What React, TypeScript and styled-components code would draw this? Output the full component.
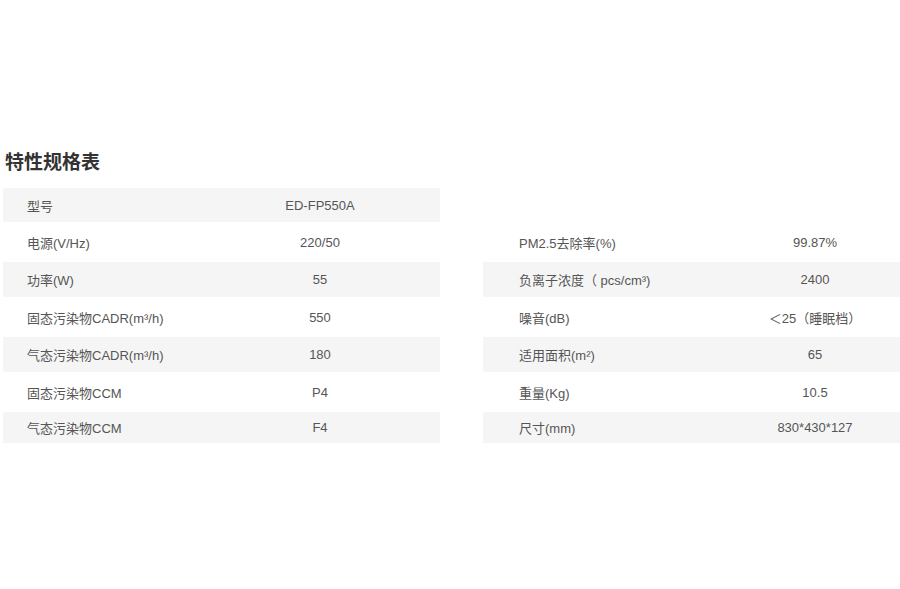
import * as React from 'react';
import styled, { createGlobalStyle } from 'styled-components';

interface SpecRow {
  label: string;
  value: string;
}

const rowHeights = [34, 40, 35, 40, 35, 40, 31];

const leftRows: (SpecRow | null)[] = [
  { label: '型号', value: 'ED-FP550A' },
  { label: '电源(V/Hz)', value: '220/50' },
  { label: '功率(W)', value: '55' },
  { label: '固态污染物CADR(m³/h)', value: '550' },
  { label: '气态污染物CADR(m³/h)', value: '180' },
  { label: '固态污染物CCM', value: 'P4' },
  { label: '气态污染物CCM', value: 'F4' },
];

// right table has no model row, so the first slot stays blank
const rightRows: (SpecRow | null)[] = [
  null,
  { label: 'PM2.5去除率(%)', value: '99.87%' },
  { label: '负离子浓度（ pcs/cm³)', value: '2400' },
  { label: '噪音(dB)', value: '＜25（睡眠档）' },
  { label: '适用面积(m²)', value: '65' },
  { label: '重量(Kg)', value: '10.5' },
  { label: '尺寸(mm)', value: '830*430*127' },
];

interface SpecTableProps {
  rows: (SpecRow | null)[];
  columns: string;
  indent: number;
}

const SpecTable: React.FC<SpecTableProps> = ({ rows, columns, indent }) => {
  return (
    <Table>
      {rows.map((row, i) => (
        <Row
          key={i}
          $columns={columns}
          $height={rowHeights[i]}
          $shaded={i % 2 === 0 && row !== null}
        >
          <Label $indent={indent}>{row ? row.label : ''}</Label>
          <Value>{row ? row.value : ''}</Value>
        </Row>
      ))}
    </Table>
  );
};

const App: React.FC = () => {
  return (
    <>
      <GlobalStyle />
      <Page>
        <Title>特性规格表</Title>
        <Tables>
          <LeftSide>
            <SpecTable rows={leftRows} columns="197px 1fr" indent={24} />
          </LeftSide>
          <RightSide>
            <SpecTable rows={rightRows} columns="247px 1fr" indent={36} />
          </RightSide>
        </Tables>
      </Page>
    </>
  );
};

const GlobalStyle = createGlobalStyle`
  html, body {
    margin: 0;
    padding: 0;
    background: #ffffff;
  }
  body {
    font-family: "Liberation Sans", "Noto Sans CJK SC", sans-serif;
  }
`;

const Page = styled.div`
  box-sizing: border-box;
  height: 589px;
  padding-top: 151px;
  width: 900px;
`;

const Title = styled.h2`
  color: #333333;
  font-family: "Noto Sans CJK SC", sans-serif;
  font-size: 19px;
  font-weight: 700;
  line-height: 20px;
  margin: 0 0 17px 5px;
`;

const Tables = styled.div`
  display: flex;
  gap: 43px;
  padding-left: 3px;
`;

const LeftSide = styled.div`
  width: 437px;
`;

const RightSide = styled.div`
  flex: 1;
`;

const Table = styled.div`
  display: flex;
  flex-direction: column;
`;

const Row = styled.div<{ $columns: string; $height: number; $shaded: boolean }>`
  align-items: center;
  background: ${(p) => (p.$shaded ? '#f5f5f5' : 'transparent')};
  color: #555555;
  display: grid;
  font-size: 13px;
  grid-template-columns: ${(p) => p.$columns};
  height: ${(p) => p.$height}px;
`;

const Label = styled.div<{ $indent: number }>`
  padding-left: ${(p) => p.$indent}px;
  white-space: nowrap;
`;

const Value = styled.div`
  text-align: center;
  white-space: nowrap;
`;

export default App;
